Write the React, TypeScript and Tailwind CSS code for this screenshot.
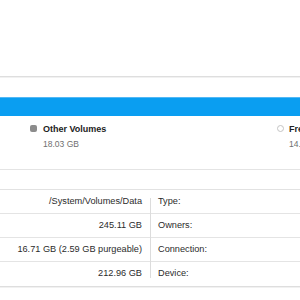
import React from "react";

const font = { fontFamily: '"Liberation Sans", Arial, sans-serif' };

export default function App() {
  const left = ["/System/Volumes/Data", "245.11 GB", "16.71 GB (2.59 GB purgeable)", "212.96 GB"];
  const right = ["Type:", "Owners:", "Connection:", "Device:"];
  return (
    <div className="w-[300px] h-[300px] bg-white overflow-hidden flex flex-col" style={font}>
      <div className="h-[76px] shrink-0" />
      <div className="h-px shrink-0 bg-[#dedede]" />
      <div className="h-px shrink-0 bg-[#f1f1f1]" />
      <div className="h-[19px] shrink-0" />
      <div className="h-px shrink-0 bg-[#52b8f5]" />
      <div className="h-[18px] shrink-0 bg-[#0a9ef1]" />
      <div className="h-[53px] shrink-0 flex pt-[8px] pl-[30px] whitespace-nowrap">
        <div className="w-[247px] shrink-0 flex items-start gap-[6px]">
          <div className="mt-[1px] w-[7px] h-[7px] rounded-[2px] bg-[#8c8c8c] shrink-0" />
          <div className="flex flex-col">
            <span className="text-[9px] leading-[11px] font-bold text-[#222]">Other Volumes</span>
            <span className="mt-[4px] text-[8.5px] leading-[10px] text-[#6f6f6f]">18.03 GB</span>
          </div>
        </div>
        <div className="shrink-0 flex items-start gap-[5px]">
          <div className="mt-[1px] w-[7px] h-[7px] rounded-full border border-[#c4c4c4] shrink-0" />
          <div className="flex flex-col">
            <span className="text-[9px] leading-[11px] font-bold text-[#222]">Free</span>
            <span className="mt-[4px] text-[8.5px] leading-[10px] text-[#6f6f6f]">14.12 GB</span>
          </div>
        </div>
      </div>
      <div className="h-px shrink-0 bg-[#e4e4e4]" />
      <div className="h-[19px] shrink-0" />
      <div className="flex shrink-0 border-t border-[#e2e2e2]">
        <div className="w-[150px] flex flex-col">
          {left.map((v, i) => (
            <div
              key={i}
              className={`h-[24px] flex items-center justify-end pr-[8px] text-[9.2px] text-[#2b2b2b] whitespace-nowrap ${i < 3 ? "border-b border-[#e4e4e4]" : "h-[23px]"}`}
            >
              {v}
            </div>
          ))}
        </div>
        <div className="w-px bg-[#dcdcdc] my-[8px]" />
        <div className="flex-1 flex flex-col">
          {right.map((v, i) => (
            <div
              key={i}
              className={`h-[24px] flex items-center pl-[7px] text-[9.2px] text-[#2b2b2b] whitespace-nowrap ${i < 3 ? "border-b border-[#e4e4e4]" : "h-[23px]"}`}
            >
              {v}
            </div>
          ))}
        </div>
      </div>
      <div className="h-px shrink-0 bg-[#dedede]" />
      <div className="h-px shrink-0 bg-[#f1f1f1]" />
    </div>
  );
}
